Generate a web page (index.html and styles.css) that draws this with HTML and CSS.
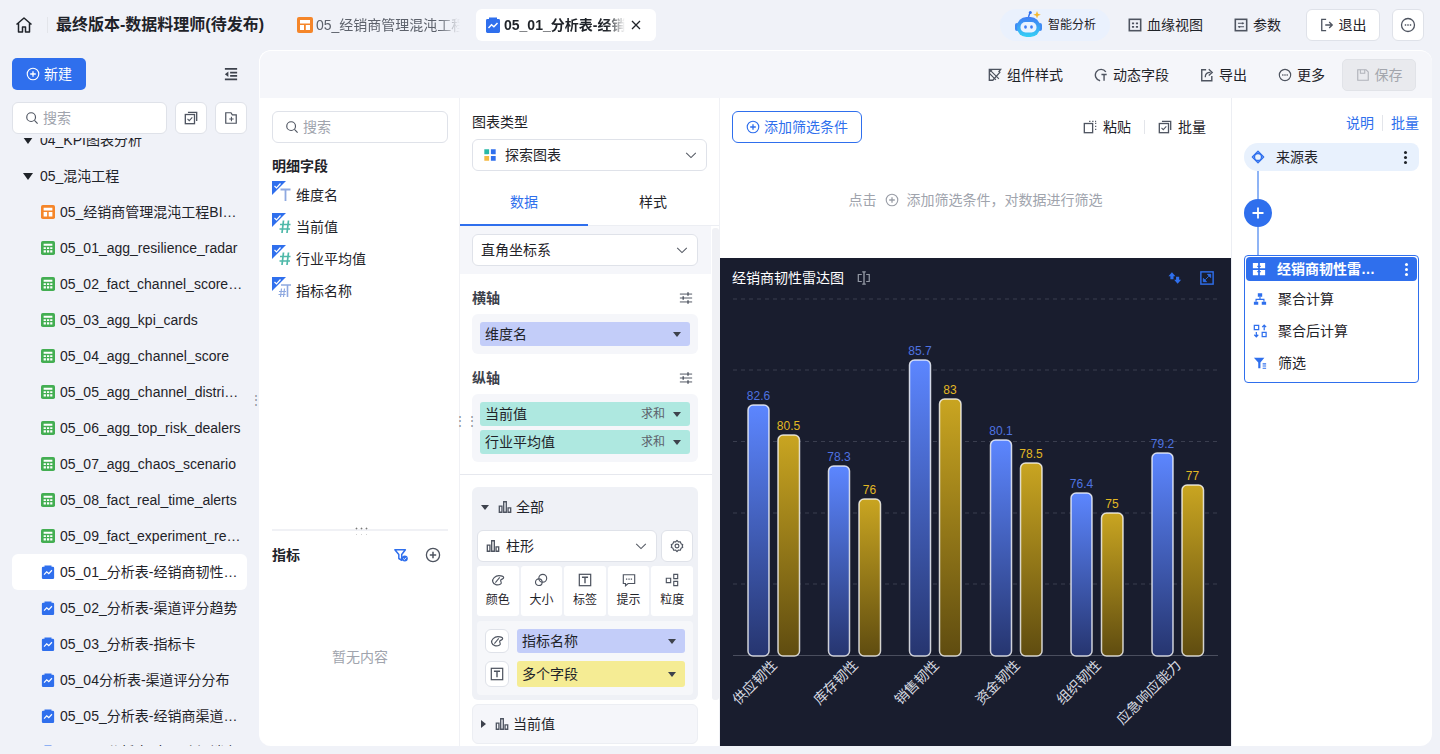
FILE: index.html
```html
<!DOCTYPE html>
<html lang="zh-CN">
<head>
<meta charset="utf-8">
<title>最终版本-数据料理师(待发布)</title>
<link rel="stylesheet" href="styles.css">
</head>
<body>
<svg class="sprite" width="0" height="0" aria-hidden="true">
  <defs>
    <linearGradient id="gb" x1="0" y1="0" x2="0" y2="1"><stop offset="0" stop-color="#5c86ff"/><stop offset="1" stop-color="#26356f"/></linearGradient>
    <linearGradient id="gy" x1="0" y1="0" x2="0" y2="1"><stop offset="0" stop-color="#c9a521"/><stop offset="1" stop-color="#5f4c10"/></linearGradient>
    <linearGradient id="grobot" x1="0" y1="0" x2="0" y2="1"><stop offset="0" stop-color="#3f7df5"/><stop offset="1" stop-color="#35d0f5"/></linearGradient>
    <symbol id="i-layout" viewBox="0 0 16 16"><rect width="16" height="16" rx="2" fill="#f5862a"/><path d="M3 3h10v3.4H3zM3 8h4v5H3zM8.800 8H13v5H8.800z" fill="#fff"/></symbol>
    <symbol id="i-table" viewBox="0 0 16 16"><rect width="16" height="16" rx="2" fill="#43ae52"/><path d="M3 3h10v2.400H3zM3 7h2.600v2.200H3zM6.800 7h2.600v2.200H6.800zM10.500 7H13v2.200h-2.500zM3 10.600h2.600V13H3zM6.800 10.600h2.600V13H6.800zM10.500 10.600H13V13h-2.500z" fill="#fff"/></symbol>
    <symbol id="i-ana" viewBox="0 0 16 16"><path d="M4 .5h8V2h1.600A1.400 1.400 0 0 1 15 3.400v11.200a1.400 1.400 0 0 1-1.400 1.400H2.400A1.400 1.400 0 0 1 1 14.600V3.400A1.400 1.400 0 0 1 2.400 2H4z" fill="#2f6fed"/><path d="M3.500 11l3-3.200 2.400 2 3.600-3.800" fill="none" stroke="#fff" stroke-width="1.400"/></symbol>
    <symbol id="i-plusc" viewBox="0 0 16 16"><circle cx="8" cy="8" r="6.600" fill="none" stroke="currentColor" stroke-width="1.300"/><path d="M8 4.800v6.400M4.800 8h6.400" stroke="currentColor" stroke-width="1.500"/></symbol>
    <symbol id="i-search" viewBox="0 0 16 16"><circle cx="7" cy="7" r="5" fill="none" stroke="currentColor" stroke-width="1.300"/><path d="M10.800 10.800l3.600 3.600" stroke="currentColor" stroke-width="1.300"/></symbol>
    <symbol id="i-chev" viewBox="0 0 16 16"><path d="M2.500 5.500L8 11l5.500-5.500" fill="none" stroke="currentColor" stroke-width="1.200"/></symbol>
    <symbol id="i-batch" viewBox="0 0 16 16"><rect x="1.500" y="4" width="10.500" height="10.500" fill="none" stroke="currentColor" stroke-width="1.500"/><path d="M4.500 1.500h10v10" fill="none" stroke="currentColor" stroke-width="1.500"/><path d="M4 9l2 2 3.500-3.800" fill="none" stroke="currentColor" stroke-width="1.200"/></symbol>
    <symbol id="i-folder" viewBox="0 0 16 16"><path d="M2 2h6l1.500 2.500H14V14H2z" fill="none" stroke="currentColor" stroke-width="1.400"/><path d="M8.500 6.600v5M6 9.100h5" stroke="currentColor" stroke-width="1.200"/></symbol>
    <symbol id="i-outdent" viewBox="0 0 16 16"><path d="M1 2h14M7 6.500h8M7 10h8M1 14h14" stroke="currentColor" stroke-width="2"/><path d="M5 5L1 8.200 5 11.500z" fill="currentColor"/></symbol>
    <symbol id="i-more" viewBox="0 0 16 16"><circle cx="8" cy="8" r="6.500" fill="none" stroke="currentColor" stroke-width="1.300"/><path d="M4.800 7.200h1.400v1.600H4.800zM7.300 7.200h1.400v1.600H7.300zM9.800 7.200h1.400v1.600H9.800z" fill="currentColor"/></symbol>
    <symbol id="i-lineage" viewBox="0 0 16 16"><rect x="1.500" y="1.500" width="13" height="13" fill="none" stroke="currentColor" stroke-width="1.800"/><path d="M4.500 5h2.500v2H4.500zM9 5h2.500v2H9zM4.500 9h2.500v2H4.500zM9 9h2.500v2H9z" fill="currentColor"/></symbol>
    <symbol id="i-param" viewBox="0 0 16 16"><rect x="1.500" y="1.500" width="13" height="13" fill="none" stroke="currentColor" stroke-width="1.800"/><path d="M4.500 6h7M4.500 10h7" stroke="currentColor" stroke-width="1.300"/><path d="M9 5h1.500v2H9zM5.500 9H7v2H5.500z" fill="currentColor"/></symbol>
    <symbol id="i-exit" viewBox="0 0 16 16"><path d="M7 1.500H2v13h5" fill="none" stroke="currentColor" stroke-width="1.500"/><path d="M6 8h8M10.500 4.500L14 8l-3.500 3.500" fill="none" stroke="currentColor" stroke-width="1.500"/></symbol>
    <symbol id="i-style" viewBox="0 0 16 16"><path d="M1.500 1.500h13l-2 2.500 1 1-8 9h-4z" fill="none" stroke="currentColor" stroke-width="1.500"/><path d="M1.500 1.500l11 11M1.500 6l7.500 7.500M5 1.500l-3.500 3.500" fill="none" stroke="currentColor" stroke-width="1.300"/></symbol>
    <symbol id="i-dyn" viewBox="0 0 16 16"><path d="M13.500 4.500A6.500 6.500 0 1 0 7 14.500" fill="none" stroke="currentColor" stroke-width="1.600"/><path d="M8.500 7.500h6M11.500 7.500v7" fill="none" stroke="currentColor" stroke-width="1.600"/></symbol>
    <symbol id="i-export" viewBox="0 0 16 16"><path d="M7 2H2v12.500h11.500V9" fill="none" stroke="currentColor" stroke-width="1.600"/><path d="M6 10.500c0-3.800 2.500-5.500 6-5.500M10 1.500L14 5l-4 3.500" fill="none" stroke="currentColor" stroke-width="1.500"/></symbol>
    <symbol id="i-save" viewBox="0 0 16 16"><path d="M2 2h9.500L14 4.500V14H2z" fill="none" stroke="currentColor" stroke-width="1.300"/><path d="M5 2v4h5V2" fill="none" stroke="currentColor" stroke-width="1.200"/></symbol>
    <symbol id="i-paste" viewBox="0 0 16 16"><rect x="1.500" y="4" width="9.500" height="10.500" fill="none" stroke="currentColor" stroke-width="1.500"/><path d="M7 1.500h1.500M10.500 1.500H12M13.800 1.500H15M14.500 3v1.500M14.500 6.500V8M14.500 10v1.500" stroke="currentColor" stroke-width="1.400"/></symbol>
    <symbol id="i-tune" viewBox="0 0 16 16"><path d="M1 3.500h14M1 8h14M1 12.500h14" stroke="currentColor" stroke-width="1.100"/><path d="M9.500 1.500h1.600v4H9.500zM4 6h1.600v4H4zM9.500 10.500h1.600v4H9.500z" fill="currentColor"/></symbol>
    <symbol id="i-bar" viewBox="0 0 16 16"><path d="M1.500 7h3v7h-3zM6.500 2h3v12h-3zM11.500 9h3v5h-3z" fill="none" stroke="currentColor" stroke-width="1.500"/></symbol>
    <symbol id="i-gear" viewBox="0 0 16 16"><path d="M8 1.500l1.500 1.800 2.300-.2.800 2.200 2 1.200L13.900 8l.7 1.500-2 1.200-.8 2.200-2.300-.2L8 14.500l-1.500-1.800-2.300.2-.8-2.200-2-1.200L2.100 8l-.7-1.500 2-1.200.8-2.200 2.300.2z" fill="none" stroke="currentColor" stroke-width="1.300" stroke-linejoin="round"/><circle cx="8" cy="8" r="2.200" fill="none" stroke="currentColor" stroke-width="1.300"/></symbol>
    <symbol id="i-palette" viewBox="0 0 16 16"><path d="M2 10c-1-3 3-7 7-7 3 0 5.500 1 5.500 2.500S11 7 11 8.500 13 11 11 12.500C7.500 14.500 3 13.500 2 10z" fill="none" stroke="currentColor" stroke-width="1.300"/><path d="M5 11l5-6" stroke="currentColor" stroke-width="1.200"/></symbol>
    <symbol id="i-size" viewBox="0 0 16 16"><circle cx="10" cy="6" r="4.500" fill="none" stroke="currentColor" stroke-width="1.300"/><circle cx="5.500" cy="10.500" r="3.800" fill="none" stroke="currentColor" stroke-width="1.300"/></symbol>
    <symbol id="i-label" viewBox="0 0 16 16"><rect x="1.500" y="1.500" width="13" height="13" fill="none" stroke="currentColor" stroke-width="1.400"/><path d="M4.500 4.800h7M8 4.800v7" fill="none" stroke="currentColor" stroke-width="1.600"/></symbol>
    <symbol id="i-tip" viewBox="0 0 16 16"><path d="M1.500 2h13v10H7l-3 2.500V12H1.500z" fill="none" stroke="currentColor" stroke-width="1.300"/><path d="M4.500 6.200h1.500v1.500H4.500zM7.300 6.200h1.500v1.500H7.300zM10 6.200h1.500v1.500H10z" fill="currentColor"/></symbol>
    <symbol id="i-gran" viewBox="0 0 16 16"><path d="M1.500 6h5v5h-5zM10 1.500h4.500v5H10zM10 9.500h4.500v5H10z" fill="none" stroke="currentColor" stroke-width="1.300"/></symbol>
    <symbol id="i-filter" viewBox="0 0 16 16"><path d="M1 2h12L8.800 7.500V14L5.500 12V7.500z" fill="none" stroke="currentColor" stroke-width="1.700" stroke-linejoin="round"/><circle cx="12.300" cy="12" r="3.500" fill="currentColor"/><path d="M10.600 12l1.300 1.300 2-2.200" fill="none" stroke="#fff" stroke-width="1"/></symbol>
    <symbol id="i-source" viewBox="0 0 16 16"><path d="M8 1.500L14.500 8 8 14.500 1.500 8z" fill="currentColor" fill-opacity=".15" stroke="currentColor" stroke-width="1.500" stroke-linejoin="round"/><circle cx="8" cy="8" r="4" fill="#e8f1fd" stroke="currentColor" stroke-width="1.500"/></symbol>
    <symbol id="i-explore" viewBox="0 0 16 16"><path d="M1.500 1.500H7v5.500H1.500z" fill="#28b8a6"/><path d="M9 1.500h5.500V7H9z" fill="#2f6fed"/><path d="M1.500 9H7v5.500H1.500z" fill="#f4b942"/><path d="M9 9h5.500v5.500H9z" fill="#2f6fed"/><path d="M6 7h4v2H6z" fill="#fff"/></symbol>
    <symbol id="i-widget" viewBox="0 0 16 16"><path d="M1 1h6v6H1zM9 1h6v6H9zM1 9h6v6H1zM9 9h6v6H9z" fill="currentColor"/><path d="M6 5h4M10 11H6" stroke="#2f6fed" stroke-width="1.500"/></symbol>
    <symbol id="i-agg" viewBox="0 0 16 16"><path d="M5.500 1.500h5v4h-5zM1 11h5v3.500H1zM10 11h5v3.500h-5z" fill="currentColor"/><path d="M8 5.500V8.500M3.500 11V8.500h9V11" fill="none" stroke="currentColor" stroke-width="1.300"/></symbol>
    <symbol id="i-calc" viewBox="0 0 16 16"><path d="M1.500 1.500h5v5h-5zM10.500 9.500h4.500v5h-4.500z" fill="none" stroke="currentColor" stroke-width="1.400"/><path d="M12.800 7V1.500M10.500 3.500l2.300-2.300L15 3.500M3.800 9v5.500M1.500 12.300l2.300 2.300 2.200-2.300" fill="none" stroke="currentColor" stroke-width="1.400"/></symbol>
    <symbol id="i-funnel" viewBox="0 0 16 16"><path d="M1 2h12L8.500 7.500V14h-2.500V7.500z" fill="currentColor"/><path d="M11 9h4M11 11.500h4M11 14h4" stroke="currentColor" stroke-width="1.200"/></symbol>
    <symbol id="i-fit" viewBox="0 0 16 16"><path d="M5.500 4H1.500v8h4M10.500 4h3.500v8h-3.500" fill="none" stroke="currentColor" stroke-width="1.400"/><path d="M8 1v14M6 1h4M6 15h4" fill="none" stroke="currentColor" stroke-width="1.600"/></symbol>
    <symbol id="i-swap" viewBox="0 0 16 16"><path d="M4.500 1.500L8.500 6H6.300v3.500H2.700V6H.5z" fill="currentColor"/><path d="M11 14.500L15 10h-2.200V6.500H9.200V10H7z" fill="currentColor"/></symbol>
    <symbol id="i-full" viewBox="0 0 16 16"><rect x="1" y="1" width="14" height="14" fill="none" stroke="currentColor" stroke-width="1.600"/><path d="M8.500 3.800h3.700v3.700zM7.500 12.200H3.800V8.500zM6 10l4-4" fill="currentColor" stroke="currentColor" stroke-width="1"/></symbol>
    <symbol id="f-t" viewBox="0 0 20 22"><path d="M0 0h14L0 14z" fill="#2f6fed"/><path d="M2.500 5l2 2 4-4.500" fill="none" stroke="#fff" stroke-width="1.200"/><path d="M8.500 8.500h10M13.500 8.500V20" fill="none" stroke="#8fa9e0" stroke-width="1.800"/></symbol>
    <symbol id="f-n" viewBox="0 0 20 22"><path d="M0 0h14L0 14z" fill="#2f6fed"/><path d="M2.500 5l2 2 4-4.500" fill="none" stroke="#fff" stroke-width="1.200"/><path d="M11.500 7.500L10 20M16.500 7.500L15 20M8 11.500h10.500M7.500 16h10.500" fill="none" stroke="#4fb9a9" stroke-width="1.700"/></symbol>
    <symbol id="f-c" viewBox="0 0 20 22"><path d="M0 0h14L0 14z" fill="#2f6fed"/><path d="M2.500 5l2 2 4-4.500" fill="none" stroke="#fff" stroke-width="1.200"/><path d="M9 8h10M15.500 8v12" fill="none" stroke="#8fa9e0" stroke-width="1.600"/><path d="M9.500 11.500L8.500 20M12.500 11.500L11.500 20M7 14.500h7M6.500 17.500h7" fill="none" stroke="#8fa9e0" stroke-width="1.200"/></symbol>
    <symbol id="i-robot" viewBox="0 0 28 26"><path d="M22 0l1 2.800 2.800 1-2.800 1-1 2.800-1-2.800-2.800-1 2.800-1z" fill="#f5b82e"/><path d="M13.500 6L15 1.500" stroke="#2f6fed" stroke-width="1.400"/><circle cx="15.300" cy="1.500" r="1.500" fill="#2f6fed"/><rect x="0" y="12" width="4" height="8" rx="2" fill="#3f8cf5"/><rect x="23" y="12" width="4" height="8" rx="2" fill="#3f8cf5"/><rect x="2" y="6" width="23" height="20" rx="9.500" fill="url(#grobot)"/><rect x="5.500" y="11" width="16" height="10.500" rx="5" fill="#eaf3ff"/><ellipse cx="10.500" cy="16" rx="1.400" ry="1.700" fill="#3f7df5"/><ellipse cx="16.500" cy="16" rx="1.400" ry="1.700" fill="#3f7df5"/></symbol>
  </defs>
</svg>

<div class="app">
  <header class="topbar">
    <svg class="ico home" viewBox="0 0 18 18"><path d="M1.500 8.500L9 2l7.500 6.500M3.500 7v9h4v-5h3v5h4V7" fill="none" stroke="#1f2329" stroke-width="1.500" stroke-linejoin="round"/></svg>
    <span class="top-div"></span>
    <h1 class="app-title">最终版本-数据料理师(待发布)</h1>
    <div class="tab">
      <svg class="ico i16"><use href="#i-layout"/></svg>
      <span class="tab-text">05_经销商管理混沌工程BI看板</span>
    </div>
    <div class="tab tab-on">
      <svg class="ico i16"><use href="#i-ana"/></svg>
      <span class="tab-text">05_01_分析表-经销商韧性雷达图</span>
      <svg class="tab-x" viewBox="0 0 10 10"><path d="M1 1l8 8M9 1l-8 8" stroke="#1f2329" stroke-width="1.300"/></svg>
    </div>
    <div class="top-right">
      <div class="ai-pill"><svg class="robot"><use href="#i-robot"/></svg><span>智能分析</span></div>
      <div class="top-link"><svg class="ico i14"><use href="#i-lineage"/></svg>血缘视图</div>
      <div class="top-link"><svg class="ico i14"><use href="#i-param"/></svg>参数</div>
      <div class="top-btn"><svg class="ico i14"><use href="#i-exit"/></svg>退出</div>
      <div class="top-btn square"><svg class="ico i16"><use href="#i-more"/></svg></div>
    </div>
  </header>

  <div class="body">
    <aside class="side">
      <div class="side-top">
        <button class="new-btn"><svg class="ico i14"><use href="#i-plusc"/></svg>新建</button>
        <svg class="ico i14 outdent"><use href="#i-outdent"/></svg>
      </div>
      <div class="side-search">
        <div class="search grow"><svg class="ico i14"><use href="#i-search"/></svg><span>搜索</span></div>
        <div class="icon-btn"><svg class="ico i14"><use href="#i-batch"/></svg></div>
        <div class="icon-btn"><svg class="ico i14"><use href="#i-folder"/></svg></div>
      </div>
      <div class="tree">
        <div class="row folder first"><span class="caret"></span><span class="row-t">04_KPI图表分析</span></div>
        <div class="row folder"><span class="caret"></span><span class="row-t">05_混沌工程</span></div>
        <div class="row"><svg class="ico i16"><use href="#i-layout"/></svg><span class="row-t">05_经销商管理混沌工程BI看板</span></div>
        <div class="row"><svg class="ico i14f"><use href="#i-table"/></svg><span class="row-t">05_01_agg_resilience_radar</span></div>
        <div class="row"><svg class="ico i14f"><use href="#i-table"/></svg><span class="row-t">05_02_fact_channel_score_trend</span></div>
        <div class="row"><svg class="ico i14f"><use href="#i-table"/></svg><span class="row-t">05_03_agg_kpi_cards</span></div>
        <div class="row"><svg class="ico i14f"><use href="#i-table"/></svg><span class="row-t">05_04_agg_channel_score</span></div>
        <div class="row"><svg class="ico i14f"><use href="#i-table"/></svg><span class="row-t">05_05_agg_channel_distribution</span></div>
        <div class="row"><svg class="ico i14f"><use href="#i-table"/></svg><span class="row-t">05_06_agg_top_risk_dealers</span></div>
        <div class="row"><svg class="ico i14f"><use href="#i-table"/></svg><span class="row-t">05_07_agg_chaos_scenario</span></div>
        <div class="row"><svg class="ico i14f"><use href="#i-table"/></svg><span class="row-t">05_08_fact_real_time_alerts</span></div>
        <div class="row"><svg class="ico i14f"><use href="#i-table"/></svg><span class="row-t">05_09_fact_experiment_results</span></div>
        <div class="row row-on"><svg class="ico i14f"><use href="#i-ana"/></svg><span class="row-t">05_01_分析表-经销商韧性雷达图</span></div>
        <div class="row"><svg class="ico i14f"><use href="#i-ana"/></svg><span class="row-t">05_02_分析表-渠道评分趋势</span></div>
        <div class="row"><svg class="ico i14f"><use href="#i-ana"/></svg><span class="row-t">05_03_分析表-指标卡</span></div>
        <div class="row"><svg class="ico i14f"><use href="#i-ana"/></svg><span class="row-t">05_04分析表-渠道评分分布</span></div>
        <div class="row"><svg class="ico i14f"><use href="#i-ana"/></svg><span class="row-t">05_05_分析表-经销商渠道分布</span></div>
        <div class="row"><svg class="ico i14f"><use href="#i-ana"/></svg><span class="row-t">05_06_分析表-高风险经销商</span></div>
      </div>
      <span class="grip grip-side">⋮</span>
    </aside>

    <main class="main">
      <div class="toolbar">
        <div class="tool"><svg class="ico i14"><use href="#i-style"/></svg>组件样式</div>
        <div class="tool"><svg class="ico i14"><use href="#i-dyn"/></svg>动态字段</div>
        <div class="tool"><svg class="ico i14"><use href="#i-export"/></svg>导出</div>
        <div class="tool"><svg class="ico i14"><use href="#i-more"/></svg>更多</div>
        <div class="save-btn"><svg class="ico i14"><use href="#i-save"/></svg>保存</div>
      </div>
      <div class="work">
        <section class="fields">
          <div class="fields-top">
            <div class="search"><svg class="ico i14"><use href="#i-search"/></svg><span>搜索</span></div>
            <h3 class="sec-title detail-title">明细字段</h3>
            <div class="field"><svg class="f-ico"><use href="#f-t"/></svg>维度名</div>
            <div class="field"><svg class="f-ico"><use href="#f-n"/></svg>当前值</div>
            <div class="field"><svg class="f-ico"><use href="#f-n"/></svg>行业平均值</div>
            <div class="field"><svg class="f-ico"><use href="#f-c"/></svg>指标名称</div>
          </div>
          <div class="split"><span class="split-dots"></span></div>
          <div class="metric-head">
            <h3 class="sec-title">指标</h3>
            <div class="metric-ico">
              <svg class="ico i14 blue"><use href="#i-filter"/></svg>
              <svg class="ico i16"><use href="#i-plusc"/></svg>
            </div>
          </div>
          <div class="empty">暂无内容</div>
        </section>

        <section class="config">
          <div class="cfg-type">
            <div class="cfg-label">图表类型</div>
            <div class="select sel-type"><svg class="ico i14"><use href="#i-explore"/></svg><span class="grow">探索图表</span><svg class="ico i14 chev"><use href="#i-chev"/></svg></div>
          </div>
          <div class="tabs"><div class="tabs-i tabs-on">数据</div><div class="tabs-i">样式</div></div>
          <div class="cfg-scroll">
            <div class="coord"><div class="select sel-coord"><span class="grow">直角坐标系</span><svg class="ico i14 chev"><use href="#i-chev"/></svg></div></div>
            <div class="axis-head"><span>横轴</span><svg class="ico i14"><use href="#i-tune"/></svg></div>
            <div class="well">
              <div class="pill indigo"><span class="grow">维度名</span><i class="tri"></i></div>
            </div>
            <div class="axis-head"><span>纵轴</span><svg class="ico i14"><use href="#i-tune"/></svg></div>
            <div class="well">
              <div class="pill teal"><span class="grow">当前值</span><em>求和</em><i class="tri"></i></div>
              <div class="pill teal"><span class="grow">行业平均值</span><em>求和</em><i class="tri"></i></div>
            </div>
            <div class="cfg-div"></div>
            <div class="mark-card">
              <div class="mark-head"><i class="tri"></i><svg class="ico i14"><use href="#i-bar"/></svg>全部</div>
              <div class="mark-sel">
                <div class="select sel-mark grow"><svg class="ico i14"><use href="#i-bar"/></svg><span class="grow">柱形</span><svg class="ico i14 chev"><use href="#i-chev"/></svg></div>
                <div class="gear"><svg class="ico i14"><use href="#i-gear"/></svg></div>
              </div>
              <div class="tiles">
                <div class="tile"><svg class="ico i14"><use href="#i-palette"/></svg>颜色</div>
                <div class="tile"><svg class="ico i14"><use href="#i-size"/></svg>大小</div>
                <div class="tile"><svg class="ico i14"><use href="#i-label"/></svg>标签</div>
                <div class="tile"><svg class="ico i14"><use href="#i-tip"/></svg>提示</div>
                <div class="tile"><svg class="ico i14"><use href="#i-gran"/></svg>粒度</div>
              </div>
              <div class="encs">
                <div class="enc"><div class="enc-ico"><svg class="ico i14"><use href="#i-palette"/></svg></div><div class="pill indigo grow"><span class="grow">指标名称</span><i class="tri"></i></div></div>
                <div class="enc"><div class="enc-ico"><svg class="ico i14"><use href="#i-label"/></svg></div><div class="pill yellow grow"><span class="grow">多个字段</span><i class="tri"></i></div></div>
              </div>
            </div>
            <div class="mark-card closed"><div class="mark-head"><i class="tri right"></i><svg class="ico i14"><use href="#i-bar"/></svg>当前值</div></div>
            <span class="scrollbar"></span>
          </div>
          <span class="grip grip-cfg">⋮⋮</span>
        </section>

        <section class="center">
          <div class="filter">
            <div class="filter-top">
              <button class="add-filter"><svg class="ico i14"><use href="#i-plusc"/></svg>添加筛选条件</button>
              <div class="filter-acts">
                <span class="act"><svg class="ico i14"><use href="#i-paste"/></svg>粘贴</span>
                <span class="act-div"></span>
                <span class="act"><svg class="ico i14"><use href="#i-batch"/></svg>批量</span>
              </div>
            </div>
            <div class="filter-hint">点击<svg class="ico i14"><use href="#i-plusc"/></svg>添加筛选条件，对数据进行筛选</div>
          </div>
          <div class="chart">
            <div class="chart-head">
              <span class="chart-title">经销商韧性雷达图</span>
              <svg class="ico i14 gray"><use href="#i-fit"/></svg>
              <span class="grow"></span>
              <svg class="ico i14 bluec"><use href="#i-swap"/></svg>
              <svg class="ico i14 cyan"><use href="#i-full"/></svg>
            </div>
            <svg class="plot" viewBox="720 298 511 448">
              <g class="grid">
                <path d="M733 299H1217M733 370H1217M733 441.500H1217M733 513H1217M733 584H1217"/>
              </g>
              <path class="axis" d="M733 655.500H1218"/>
              <g class="bars">
                <rect x="748" y="405" width="21" height="251" rx="5" fill="url(#gb)"/>
                <rect x="778" y="435" width="21.500" height="221" rx="5" fill="url(#gy)"/>
                <rect x="828.500" y="466" width="21" height="190" rx="5" fill="url(#gb)"/>
                <rect x="859" y="499" width="21.500" height="157" rx="5" fill="url(#gy)"/>
                <rect x="909.500" y="360" width="21" height="296" rx="5" fill="url(#gb)"/>
                <rect x="939.500" y="399" width="21.500" height="257" rx="5" fill="url(#gy)"/>
                <rect x="990.500" y="440" width="21" height="216" rx="5" fill="url(#gb)"/>
                <rect x="1020.500" y="463" width="21.500" height="193" rx="5" fill="url(#gy)"/>
                <rect x="1071" y="493" width="21" height="163" rx="5" fill="url(#gb)"/>
                <rect x="1101.500" y="513" width="21.500" height="143" rx="5" fill="url(#gy)"/>
                <rect x="1152" y="453" width="21" height="203" rx="5" fill="url(#gb)"/>
                <rect x="1182" y="485" width="21.500" height="171" rx="5" fill="url(#gy)"/>
              </g>
              <g class="vals vb">
                <text x="758.500" y="400">82.6</text><text x="839" y="461">78.3</text><text x="920" y="355">85.7</text><text x="1001" y="435">80.1</text><text x="1081.500" y="488">76.4</text><text x="1162.500" y="448">79.2</text>
              </g>
              <g class="vals vy">
                <text x="788.500" y="430">80.5</text><text x="869.500" y="494">76</text><text x="950" y="394">83</text><text x="1031" y="458">78.5</text><text x="1112" y="508">75</text><text x="1192.500" y="480">77</text>
              </g>
              <g class="cats">
                <text transform="translate(778 666) rotate(-45)">供应韧性</text>
                <text transform="translate(859 666) rotate(-45)">库存韧性</text>
                <text transform="translate(940 666) rotate(-45)">销售韧性</text>
                <text transform="translate(1021 666) rotate(-45)">资金韧性</text>
                <text transform="translate(1102 666) rotate(-45)">组织韧性</text>
                <text transform="translate(1182 666) rotate(-45)">应急响应能力</text>
              </g>
            </svg>
          </div>
        </section>

        <section class="flow">
          <div class="flow-links"><span>说明</span><i></i><span>批量</span></div>
          <div class="flow-src"><svg class="ico i14 blue"><use href="#i-source"/></svg><span class="grow">来源表</span><b class="kebab"></b></div>
          <div class="flow-line"></div>
          <div class="flow-add"><svg viewBox="0 0 12 12"><path d="M6 .5v11M.5 6h11" stroke="#fff" stroke-width="1.800"/></svg></div>
          <div class="flow-line short"></div>
          <div class="flow-card">
            <div class="flow-cur"><svg class="ico i14"><use href="#i-widget"/></svg><span class="grow cur-t">经销商韧性雷达图</span><b class="kebab light"></b></div>
            <div class="flow-row"><svg class="ico i14 blue"><use href="#i-agg"/></svg>聚合计算</div>
            <div class="flow-row"><svg class="ico i14 blue"><use href="#i-calc"/></svg>聚合后计算</div>
            <div class="flow-row"><svg class="ico i14 blue"><use href="#i-funnel"/></svg>筛选</div>
          </div>
        </section>
      </div>
    </main>
  </div>
</div>
</body>
</html>
```

FILE: styles.css
```css
* { box-sizing: border-box; }
html, body { margin: 0; height: 754px; overflow: hidden; }
body {
  background: #f0f2f8;
  color: #1f2329;
  font: 14px/20px "Liberation Sans", "Noto Sans CJK SC", sans-serif;
}
.sprite { position: absolute; }
.ico { display: block; flex: none; color: #4e5460; }
.i14 { width: 14px; height: 14px; }
.i16 { width: 16px; height: 16px; }
.i14f { width: 14px; height: 16px; }
.grow { flex: 1; min-width: 0; }
.blue { color: #2f6fed; }
h1, h3 { margin: 0; }

.app { display: flex; flex-direction: column; height: 754px; }

/* top bar */
.topbar { height: 50px; display: flex; align-items: center; padding: 0 16px 0 15px; }
.home { width: 18px; height: 18px; }
.top-div { width: 1px; height: 16px; background: #e3e5ea; margin: 0 8px 0 14px; }
.app-title { font-size: 16px; font-weight: 700; width: 226px; white-space: nowrap; }
.tab { display: flex; align-items: center; gap: 3px; height: 32px; padding: 0 0 0 15px; width: 194px; color: #5c616b; }
.tab-text {
  width: 144px; overflow: hidden; white-space: nowrap;
  -webkit-mask-image: linear-gradient(90deg, #000 85%, transparent);
  mask-image: linear-gradient(90deg, #000 85%, transparent);
}
.tab-on { background: #fff; border-radius: 6px; padding-left: 9px; width: 180px; color: #1f2329; font-weight: 700; gap: 3px; }
.tab-on .tab-text { width: 121px; }
.tab-x { width: 10px; height: 10px; margin-left: 3px; flex: none; }
.top-right { margin-left: auto; display: flex; align-items: center; }
.ai-pill { display: flex; align-items: center; gap: 5px; width: 110px; height: 32px; padding-left: 15px; background: #eaf1fd; border-radius: 16px; font-size: 12px; margin-right: 18px; }
.robot { width: 28px; height: 26px; flex: none; margin-top: -2px; }
.top-link { display: flex; align-items: center; gap: 5px; margin-right: 31px; }
.top-link + .top-link { margin-right: 25px; }
.top-btn { display: flex; align-items: center; justify-content: center; gap: 5px; width: 74px; height: 32px; background: #fff; border: 1px solid #dfe2e9; border-radius: 6px; }
.top-btn.square { width: 32px; margin-left: 12px; }

/* body */
.body { flex: 1; min-height: 0; display: flex; padding: 0 8px 8px 0; }

/* sidebar */
.side { width: 259px; flex: none; position: relative; display: flex; flex-direction: column; padding: 8px 12px 0; }
.side-top { display: flex; align-items: center; justify-content: space-between; height: 32px; padding-right: 9px; }
.new-btn { display: flex; align-items: center; gap: 4px; width: 74px; height: 32px; padding: 0 0 0 14px; border: 0; border-radius: 5px; background: #2f6fed; color: #fff; font: inherit; }
.new-btn .ico { color: #fff; }
.outdent { color: #3d424c; }
.side-search { display: flex; gap: 8px; margin: 12px 0 4px; }
.search { display: flex; align-items: center; gap: 4px; height: 32px; padding: 0 12px; background: #fff; border: 1px solid #dfe2e9; border-radius: 6px; color: #a0a4ad; }
.icon-btn { width: 32px; height: 32px; flex: none; display: flex; align-items: center; justify-content: center; background: #fff; border: 1px solid #dfe2e9; border-radius: 6px; }
.tree { flex: 1; min-height: 0; overflow: hidden; }
.row { display: flex; align-items: center; gap: 5px; height: 36px; padding: 0 4px 0 29px; border-radius: 6px; }
.row.first { margin-top: -16px; }
.row.folder { padding-left: 11px; gap: 7px; }
.row-t { flex: 1; min-width: 0; overflow: hidden; white-space: nowrap; text-overflow: ellipsis; }
.row-on { background: #fff; }
.row .i16 { width: 14px; height: 14px; }
.caret { width: 0; height: 0; border: 5px solid transparent; border-top: 7px solid #1f2329; border-bottom: 0; flex: none; }
.grip { position: absolute; color: #8a8f99; font-size: 12px; line-height: 14px; z-index: 1; }
.grip-side { right: -3px; top: 343px; }

/* main */
.main { flex: 1; min-width: 0; display: flex; flex-direction: column; border-radius: 12px; overflow: hidden; background: #fff; border: 1px solid #fff; border-width: 1px 0 0 1px; }
.toolbar { height: 47px; flex: none; display: flex; align-items: center; justify-content: flex-end; background: #f5f6fa; padding: 0 16px 0 0; gap: 31px; }
.tool { display: flex; align-items: center; gap: 5px; }
.tool:nth-child(4) { margin-right: -14px; }
.save-btn { display: flex; align-items: center; justify-content: center; gap: 5px; width: 74px; height: 32px; background: #e9eaee; border: 1px solid #e1e3e8; border-radius: 5px; color: #a3a6ad; }
.save-btn .ico { color: #b0b3ba; }
.work { flex: 1; min-height: 0; display: flex; }

/* fields column */
.fields { width: 200px; flex: none; display: flex; flex-direction: column; padding: 0 11px 0 12px; border-right: 1px solid #f0f1f5; }
.fields-top { height: 431px; flex: none; padding-top: 13px; }
.sec-title { font-size: 14px; font-weight: 700; }
.detail-title { margin-top: 13px; }
.field { display: flex; align-items: flex-end; gap: 4px; height: 32px; padding-bottom: 2px; }
.detail-title + .field { margin-top: -1px; }
.f-ico { width: 20px; height: 22px; margin-top: -4px; margin-bottom: 2px; flex: none; }
.split { height: 2px; background: #f0f1f5; position: relative; }
.split-dots { position: absolute; left: 82px; top: -4px; width: 15px; height: 10px; background: radial-gradient(circle, #777 .8px, transparent 1.100px) 0 0 / 5px 7px; }
.metric-head { display: flex; align-items: center; justify-content: space-between; margin-top: 14px; height: 20px; padding-right: 7px; }
.metric-ico { display: flex; gap: 17px; align-items: center; }
.empty { text-align: center; color: #a0a4ad; margin-top: 82px; }

/* config column */
.config { width: 260px; flex: none; position: relative; display: flex; flex-direction: column; border-right: 1px solid #f0f1f5; }
.cfg-type { padding: 14px 12px 0 12px; height: 81px; flex: none; }
.cfg-label { height: 20px; }
.select { display: flex; align-items: center; gap: 6px; height: 32px; padding: 0 8px 0 9px; background: #fff; border: 1px solid #dfe2e9; border-radius: 6px; }
.sel-type { margin-top: 7px; width: 235px; padding-left: 10px; gap: 8px; padding-right: 8px; }
.chev { color: #555a64; }
.tabs { height: 47px; flex: none; display: flex; border-bottom: 1px solid #eceef3; }
.tabs-i { width: 128px; display: flex; align-items: center; justify-content: center; border-bottom: 2px solid transparent; margin-bottom: -1px; }
.tabs-i + .tabs-i { width: 130px; }
.tabs-on { color: #2f6fed; border-bottom-color: #2f6fed; }
.cfg-scroll { flex: 1; min-height: 0; position: relative; overflow: hidden; padding-right: 21px; }
.coord { background: #f5f6fa; padding: 8px 13px 8px 12px; margin-right: -13px; height: 48px; }
.sel-coord { width: 226px; padding-left: 8px; }
.axis-head { display: flex; align-items: center; justify-content: space-between; height: 20px; margin: 14px 0 6px 12px; color: #3d424c; font-weight: 700; width: 221px; }
.well { margin-left: 12px; width: 226px; padding: 8px; background: #f5f6fa; border-radius: 6px; display: flex; flex-direction: column; gap: 4px; }
.pill { display: flex; align-items: center; height: 24px; padding: 0 9px 0 5px; border-radius: 3px; gap: 8px; }
.pill em { font-style: normal; font-size: 12px; color: #5c616b; }
.indigo { background: #c3cdf9; }
.teal { background: #aee8e0; }
.yellow { background: #f5ec94; }
.tri { width: 0; height: 0; flex: none; border: 4px solid transparent; border-top: 5px solid #3d424c; border-bottom: 0; }
.tri.right { border: 4px solid transparent; border-left: 5px solid #3d424c; border-right: 0; }
.cfg-div { height: 1px; background: #e6e8ee; margin: 12px -21px 0 0; }
.mark-card { margin: 12px 0 0 12px; width: 226px; height: 213px; background: #eff1f6; border-radius: 6px; padding: 0 5px; }
.mark-head { display: flex; align-items: center; gap: 6px; height: 40px; padding-left: 4px; margin-bottom: 3px; }
.mark-head .i14 { margin-left: 3px; margin-right: -2px; }
.mark-sel { display: flex; gap: 4px; }
.sel-mark { padding-left: 8px; }
.gear { width: 32px; height: 32px; flex: none; display: flex; align-items: center; justify-content: center; background: #fff; border: 1px solid #dfe2e9; border-radius: 6px; }
.tiles { display: flex; gap: 2px; margin-top: 4px; }
.tile { flex: 1; height: 50px; background: #fff; border-radius: 3px; display: flex; flex-direction: column; align-items: center; justify-content: center; gap: 4px; font-size: 12px; line-height: 18px; }
.encs { margin-top: 5px; background: #f6f7fa; border-radius: 4px; padding: 8px; height: 74px; display: flex; flex-direction: column; gap: 8px; }
.enc { display: flex; align-items: center; gap: 8px; }
.enc-ico { width: 24px; height: 24px; flex: none; display: flex; align-items: center; justify-content: center; background: #fff; border: 1px solid #dfe2e9; border-radius: 6px; }
.enc + .enc .enc-ico, .enc + .enc .pill { height: 26px; }
.closed { height: 40px; margin-top: 4px; background: #f5f6fa; border: 1px solid #eceef3; padding: 0 4px; }
.closed .mark-head { height: 38px; }
.scrollbar { position: absolute; right: 0; top: 2px; width: 7px; height: 472px; background: #f0f1f5; border-radius: 3px; }
.grip-cfg { left: -6px; top: 316px; }

/* center */
.center { width: 511px; flex: none; display: flex; flex-direction: column; }
.filter { height: 160px; flex: none; padding: 13px 12px 0; }
.filter-top { display: flex; align-items: center; justify-content: space-between; }
.add-filter { display: flex; align-items: center; gap: 4px; width: 130px; height: 32px; padding: 0 0 0 13px; background: #fff; border: 1px solid #2f6fed; border-radius: 6px; color: #2f6fed; font: inherit; }
.add-filter .ico { color: #2f6fed; }
.filter-acts { display: flex; align-items: center; gap: 13px; padding-right: 13px; }
.act { display: flex; align-items: center; gap: 6px; }
.act-div { width: 1px; height: 14px; background: #e3e5ea; }
.filter-hint { display: flex; align-items: center; justify-content: center; gap: 8px; margin-top: 47px; color: #a0a4ad; }
.filter-hint .ico { color: #9a9ea7; }
.chart { flex: 1; min-height: 0; background: #191d2e; display: flex; flex-direction: column; }
.chart-head { height: 40px; flex: none; display: flex; align-items: center; gap: 13px; padding: 0 17px 0 12px; color: #fff; }
.gray { color: #9398a4; }
.bluec { color: #2f6fed; }
.cyan { color: #2f6fed; margin-left: 5px; }
.plot { display: block; width: 511px; height: 448px; flex: none; }
.grid path { stroke: #3a3e4f; stroke-dasharray: 4 4; fill: none; }
.axis { stroke: #4a4e5e; fill: none; }
.bars rect { stroke: rgba(255, 255, 255, .78); stroke-width: 1.5; }
.vals text { font-size: 12px; text-anchor: middle; }
.vb text { fill: #4f73e0; }
.vy text { fill: #e2b824; }
.cats text { font-size: 14px; fill: #d6d9e0; text-anchor: end; }

/* flow */
.flow { width: 201px; flex: none; position: relative; padding: 15px 13px 0 12px; border-left: 1px solid #eceef3; }
.flow-links { display: flex; justify-content: flex-end; align-items: center; gap: 8px; color: #2f6fed; height: 20px; }
.flow-links i { width: 1px; height: 16px; background: #e3e5ea; }
.flow-src { display: flex; align-items: center; gap: 11px; height: 28px; margin-top: 10px; padding: 0 8px 0 7px; background: #e8f1fd; border-radius: 14px 8px 8px 14px; }
.flow-line { width: 2px; height: 28px; margin-left: 13px; background: #8fb4f5; }
.flow-add { width: 28px; height: 28px; border-radius: 50%; background: #2f6fed; display: flex; align-items: center; justify-content: center; }
.flow-add svg { width: 12px; height: 12px; }
.flow-card { border: 1px solid #2f6fed; border-radius: 4px; height: 128px; padding: 1px; }
.flow-cur { display: flex; align-items: center; gap: 11px; height: 24px; padding: 0 6px; background: #2f6fed; border-radius: 4px; color: #fff; font-weight: 700; }
.flow-cur .ico { color: #fff; }
.cur-t { overflow: hidden; white-space: nowrap; text-overflow: ellipsis; margin-right: 18px; }
.flow-row { display: flex; align-items: center; gap: 11px; height: 32px; padding-left: 7px; }
.flow-cur + .flow-row { margin-top: 2px; }
.kebab { width: 3px; height: 3px; border-radius: 50%; background: #1f2329; box-shadow: 0 -5px 0 #1f2329, 0 5px 0 #1f2329; flex: none; margin-right: 4px; }
.kebab.light { background: #fff; box-shadow: 0 -5px 0 #fff, 0 5px 0 #fff; margin-right: 3px; }
```
